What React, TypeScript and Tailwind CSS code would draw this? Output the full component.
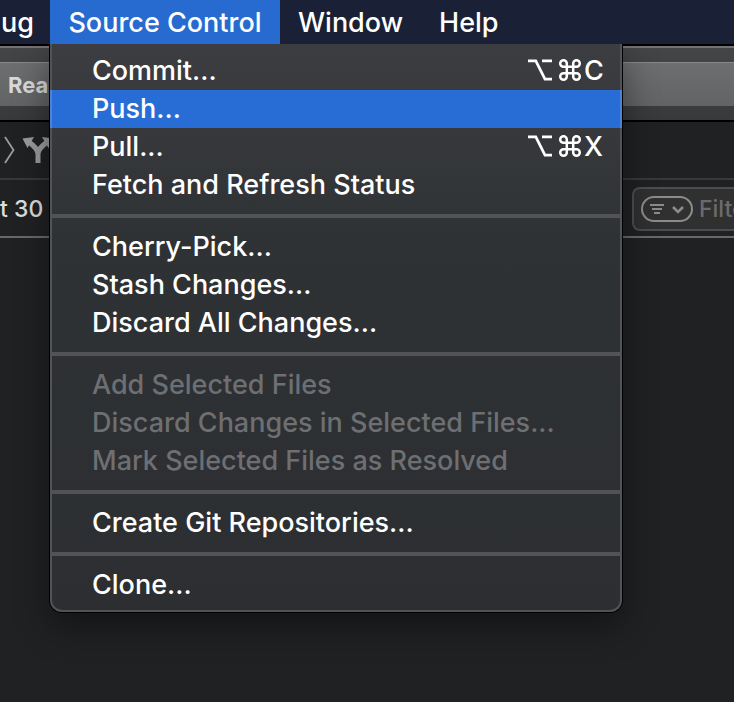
type MenuEntry = {
  label: string;
  shortcut?: string;
  selected?: boolean;
  disabled?: boolean;
};

const groups: MenuEntry[][] = [
  [
    { label: "Commit...", shortcut: "C" },
    { label: "Push...", selected: true },
    { label: "Pull...", shortcut: "X" },
    { label: "Fetch and Refresh Status" },
  ],
  [
    { label: "Cherry-Pick..." },
    { label: "Stash Changes..." },
    { label: "Discard All Changes..." },
  ],
  [
    { label: "Add Selected Files", disabled: true },
    { label: "Discard Changes in Selected Files...", disabled: true },
    { label: "Mark Selected Files as Resolved", disabled: true },
  ],
  [{ label: "Create Git Repositories..." }],
  [{ label: "Clone..." }],
];

function OptionCommand() {
  return (
    <svg
      width="54"
      height="24"
      viewBox="0 0 54 24"
      fill="none"
      stroke="currentColor"
      aria-hidden="true"
    >
      <path d="M0 1.8h7.8L17 20.200h7M14 1.8h10" strokeWidth="2.700" />
      <path
        d="M38.8 4.500a3.300 3.300 0 1 0-3.300 3.300H48.500a3.300 3.300 0 1 0-3.300-3.300V17.500a3.300 3.300 0 1 0 3.300-3.300H35.500a3.300 3.300 0 1 0 3.300 3.300z"
        strokeWidth="2.500"
      />
    </svg>
  );
}

function MenuItem({ label, shortcut, selected, disabled }: MenuEntry) {
  return (
    <button
      type="button"
      role="menuitem"
      disabled={disabled}
      className={`flex h-[38px] w-full items-center pr-4 pl-10 text-left ${
        selected
          ? "bg-[#276dd5] shadow-[-2px_0_0_#4a83d9,2px_0_0_#4a83d9]"
          : ""
      } ${disabled ? "text-[#6d6f72]" : "text-white"}`}
    >
      <span className="flex-1">{label}</span>
      {shortcut && (
        <span className="flex items-center gap-0.5">
          <OptionCommand />
          <span className="w-5">{shortcut}</span>
        </span>
      )}
    </button>
  );
}

function SourceControlMenu() {
  return (
    <div
      role="menu"
      aria-label="Source Control"
      className="absolute top-11 left-[50px] w-[572px] rounded-b-xl border-2 border-t-0 border-[#515356] bg-linear-to-b from-[#3c3d40] via-[#2f3235] via-35% to-[#2c2e31] pt-2 pb-[6px] shadow-[0_0_0_1px_#000,0_12px_36px_rgba(0,0,0,0.45)]"
    >
      {groups.map((items, i) => (
        <div key={i}>
          {i > 0 && <hr className="my-[10px] border-t-4 border-[#515356]" />}
          {items.map((item) => (
            <MenuItem key={item.label} {...item} />
          ))}
        </div>
      ))}
    </div>
  );
}

function MenuBar() {
  return (
    <nav className="relative z-10 flex h-11 bg-[#1a2035] text-white">
      <button
        type="button"
        className="flex w-[50px] items-center justify-end pt-0.5 pr-4"
      >
        ug
      </button>
      <button
        type="button"
        aria-expanded="true"
        className="flex w-[230px] items-center justify-center bg-[#276ad0] pt-0.5"
      >
        Source Control
      </button>
      <button type="button" className="flex items-center px-[18px] pt-0.5">
        Window
      </button>
      <button type="button" className="flex items-center px-[18px] pt-0.5">
        Help
      </button>
    </nav>
  );
}

export default function App() {
  return (
    <div className="relative min-h-screen overflow-hidden bg-[#202123] font-['Inter',sans-serif] text-[27px] leading-8 font-[450]">
      <MenuBar />
      <header className="border-t-2 border-b-2 border-black">
        <div className="border-t-2 border-[#737375] bg-linear-to-b from-[#444547] to-[#38393b] py-[14px]">
          <div className="flex h-11 items-center border-t border-[#89898b] bg-linear-to-b from-[#6d6e70] to-[#626365] pl-2 text-[22px] font-bold text-[#d9d9da]">
            Rea
          </div>
        </div>
      </header>
      <div className="flex h-[58px] items-center border-b-2 border-[#38393b] text-[#9b9c9d]">
        <svg
          width="54"
          height="36"
          viewBox="0 0 54 36"
          fill="none"
          stroke="currentColor"
          aria-hidden="true"
        >
          <path d="M5 5l8.500 13L5 31" strokeWidth="1.800" />
          <path
            d="M38 31V22c0-5-4-8-9-12M38 22c0-5 4-8 9-12"
            strokeWidth="5"
          />
          <path
            d="M22.500 6.500L34 5l-6.500 11zM53.500 6.500L42 5l6.500 11z"
            fill="currentColor"
            stroke="none"
          />
        </svg>
      </div>
      <div className="flex h-[58px] items-center justify-between border-b-2 border-[#68696b] pt-0.5">
        <span className="text-[23px] text-[#dedede]">t 30</span>
        <label className="flex h-11 w-[102px] items-center gap-1.5 rounded-l-lg border-2 border-r-0 border-[#4c4d4e] bg-[#303031] pl-[7px]">
          <svg
            className="shrink-0"
            width="52"
            height="26"
            viewBox="0 0 52 26"
            fill="none"
            stroke="#8b8c8d"
            strokeWidth="2"
            aria-hidden="true"
          >
            <rect x="1" y="1" width="50" height="24" rx="12" />
            <path d="M9 9h14M11 13h10M13 17h6" />
            <path d="M32 11l5 5 5-5" strokeWidth="2.600" />
          </svg>
          <input
            aria-label="Filter"
            placeholder="Filter"
            className="w-full min-w-0 bg-transparent text-[23px] outline-none placeholder:text-[#6b6b6c]"
          />
        </label>
      </div>
      <SourceControlMenu />
    </div>
  );
}
